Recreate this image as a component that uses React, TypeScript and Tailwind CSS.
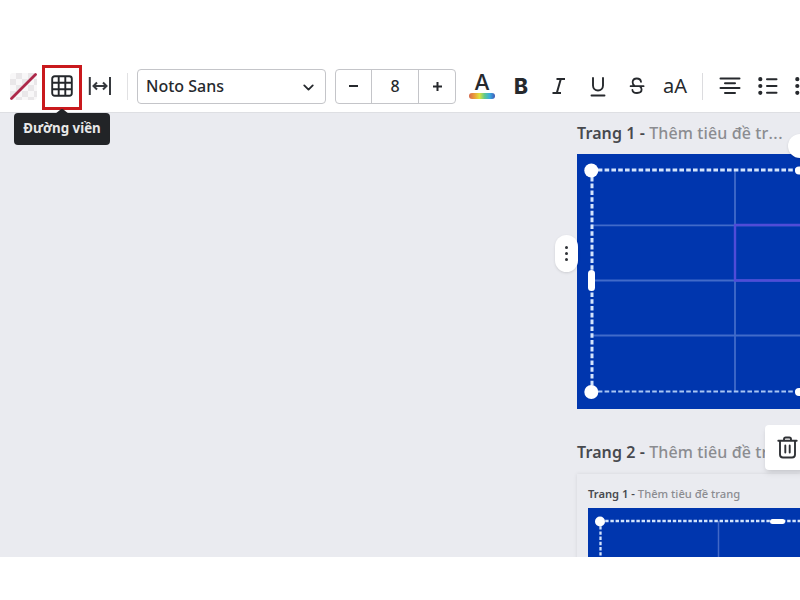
import { ReactNode } from "react"
import { ChevronDown } from "lucide-react"

function Toolbar() {
    return (
        <header className="mt-[60px] h-[52px] w-[840px] shrink-0 flex items-center bg-white text-[#26292d]">
            <svg className="ml-[10px] shrink-0" width="27" height="27" viewBox="0 0 27 27">
                <rect width="27" height="27" rx="3" fill="#f8f7f8" />
                <path d="M6 0h6v6H6zM18 0h6v6h-6zM0 6h6v6H0zM12 6h6v6h-6zM24 6h3v6h-3zM6 12h6v6H6zM18 12h6v6h-6zM0 18h6v6H0zM12 18h6v6h-6zM24 18h3v6h-3zM6 24h6v3H6zM18 24h6v3h-6z" fill="#e9e7e9" />
                <path d="M1.5 25.5L25.5 1.5" stroke="#ad2849" strokeWidth="2.8" strokeLinecap="round" />
            </svg>

            <div className="relative ml-[5px] w-10 h-[45px] mt-[2px] shrink-0 flex items-center justify-center border-[3px] border-[#c9191d]">
                <svg className="mb-[2px]" width="22" height="22" viewBox="0 0 22 22" fill="none" stroke="#24272b" strokeWidth="1.9">
                    <rect x="1.2" y="1.2" width="19.6" height="19.6" rx="2.5" />
                    <path d="M7.7 1v20M14.3 1v20M1 7.7h20M1 14.3h20" />
                </svg>
                <div className="absolute z-10 top-[45px] left-1/2 -translate-x-1/2 w-24 h-[32px] flex items-center justify-center rounded bg-[#222427] text-[#e8e8e8] text-[13.3px] font-bold whitespace-nowrap">
                    <svg className="absolute -top-[4px] left-[41px]" width="14" height="5" viewBox="0 0 14 5" fill="#222427">
                        <path d="M0 5L5 1Q7 -1 9 1L14 5z" />
                    </svg>
                    Đường viền
                </div>
            </div>

            <svg className="ml-[6px] shrink-0" width="24" height="22" viewBox="0 0 24 22" fill="none" stroke="#36393e" strokeWidth="2">
                <path d="M1.8 2v18M22 2v18M5.5 11h13M9 7.5L5.5 11L9 14.5M15 7.5L18.5 11L15 14.5" />
            </svg>
            <div className="ml-[15px] w-px h-[27px] bg-[#e1e1e3]" />

            <div className="ml-[9px] w-[189px] h-[35px] px-2 shrink-0 flex items-center justify-between border border-[#c4c5c9] rounded">
                <span className="text-base font-medium">Noto Sans</span>
                <ChevronDown className="mt-[2px]" size={17} strokeWidth={2.6} />
            </div>

            <div className="ml-[9px] w-[121px] h-[35px] shrink-0 flex border border-[#c4c5c9] rounded">
                <button className="w-[35px] flex items-center justify-center">
                    <svg width="9" height="10" stroke="currentColor" strokeWidth="2"><path d="M0 5h9" /></svg>
                </button>
                <div className="grow flex items-center justify-center border-x border-[#c4c5c9] text-base font-medium">8</div>
                <button className="w-9 flex items-center justify-center">
                    <svg width="9" height="9" stroke="currentColor" strokeWidth="2"><path d="M0 4.5h9M4.5 0v9" /></svg>
                </button>
            </div>

            <div className="ml-[13px] w-[26px] shrink-0 flex flex-col items-center">
                <span className="h-[19px] leading-[19px] text-[22px] font-medium font-['Inter',sans-serif]">A</span>
                <div className="mt-[1px] w-full h-[6px] rounded-full bg-[linear-gradient(90deg,#d5694c,#eb9b3a,#dfe13b,#5fc98d,#39aadf,#4157b5)]" />
            </div>
            <div className="ml-[17px] w-[18px] shrink-0 text-center text-[21px] leading-none font-extrabold font-['Inter',sans-serif]">B</div>
            <svg className="ml-[20px] shrink-0" width="18" height="18" viewBox="0 0 18 18" fill="none" stroke="currentColor" strokeWidth="2">
                <path d="M6.5 2H15M2.5 16H11M10.8 2L6.8 16" />
            </svg>
            <svg className="ml-[21px] mt-[2px] shrink-0" width="18" height="22" viewBox="0 0 18 22" fill="none" stroke="currentColor" strokeWidth="1.9">
                <path d="M4 2v7.5a5 5 0 0 0 10 0V2M2.5 19.5h13" strokeLinecap="round" />
            </svg>
            <svg className="ml-[22px] shrink-0" width="16" height="18" viewBox="0 0 16 18" fill="none" stroke="currentColor" strokeWidth="1.8">
                <path d="M12 4.8Q11.6 1.5 7.8 1.5T3.6 5Q3.6 7.6 5.5 8.8M1.6 9.2h13M10.8 9.2Q12.6 10.4 12.6 12.6Q12.6 16 8 16T3.4 12.8" strokeLinecap="round" />
            </svg>
            <div className="ml-[16px] w-[28px] shrink-0 text-center text-xl leading-none">aA</div>
            <div className="ml-[13px] w-px h-[27px] shrink-0 bg-[#dcdcdf]" />
            <svg className="ml-[16px] shrink-0" width="22" height="18" stroke="currentColor" strokeWidth="2" strokeLinecap="round">
                <path d="M1.5 1.5h19M6 6.3h10M1.5 11.1h19M6 16h10" />
            </svg>
            <BulletList className="ml-[17px] shrink-0" />
            <BulletList className="ml-[17px] shrink-0" />
        </header>
    )
}

function BulletList({ className }: { className: string }) {
    return (
        <svg className={className} width="20" height="18" fill="currentColor" stroke="currentColor" strokeLinecap="round">
            <path d="M2.3 2.2h.01M2.3 9h.01M2.3 15.8h.01" strokeWidth="4.2" />
            <path d="M9 2.2h9.5M9 9h9.5M9 15.8h9.5" strokeWidth="2" />
        </svg>
    )
}

function PageTitle({ name, className, children }: { name: string, className: string, children: ReactNode }) {
    return (
        <h2 className={`whitespace-nowrap font-medium text-[#8b8c90] ${className}`}>
            <span className="font-semibold text-[#47494e]">{name} - </span>
            {children}
        </h2>
    )
}

function SelectedTable() {
    return (
        <svg className="block" width="223" height="255" viewBox="0 0 223 255" fill="none">
            <rect width="223" height="255" fill="#0036ae" />
            <g stroke="#416bc9" strokeWidth="1.8">
                <path d="M14 71.3h209M14 126.5h209M14 181.5h209M158 16v222" />
            </g>
            <path d="M223 71H158v55.5h65" stroke="#504cd8" strokeWidth="2.4" />
            <g stroke="#d3e4fc" strokeDasharray="4.6 2.2">
                <path d="M14 16h209" strokeWidth="3" />
                <path d="M15 16v222" strokeWidth="3" />
                <path d="M14 237.5h209" strokeWidth="2.2" stroke="#a9c6f3" />
            </g>
            <g fill="#fff">
                <circle cx="14.3" cy="16.5" r="7" />
                <circle cx="14.3" cy="238" r="7" />
                <circle cx="222" cy="16.5" r="4" />
                <circle cx="222" cy="238" r="4" />
                <rect x="11" y="116" width="7" height="21" rx="3.5" />
            </g>
        </svg>
    )
}

function NestedTable() {
    return (
        <svg className="block" width="212" height="60" viewBox="0 0 212 60" fill="none">
            <rect width="212" height="60" fill="#0036ae" />
            <path d="M130.5 13v47" stroke="#4168c7" strokeWidth="1.5" />
            <path d="M12 13h200M12.5 13v47" stroke="#d3e4fc" strokeWidth="2.3" strokeDasharray="3.4 1.8" />
            <circle cx="12" cy="13.5" r="5" fill="#fff" />
            <rect x="182" y="11" width="15" height="5" rx="2.5" fill="#fff" />
        </svg>
    )
}

export default function App() {
    return (
        <div className="w-[800px] h-[600px] overflow-hidden flex flex-col bg-white font-['Noto_Sans','Open_Sans',sans-serif]">
            <Toolbar />
            <main className="h-[445px] shrink-0 overflow-hidden bg-[#eaebf0] border-t border-[#dedfe3] pl-[577px]">
                <PageTitle name="Trang 1" className="mt-[8px] h-[33px] leading-6 text-base tracking-[0.1px]">
                    Thêm tiêu đề tr<span className="tracking-[0.6px]">...</span>
                </PageTitle>
                <section className="relative">
                    <SelectedTable />
                    <div className="absolute -left-[22px] top-[81px] w-[23px] h-[37px] flex flex-col items-center justify-center gap-[3px] rounded-full bg-white shadow">
                        <i className="size-[3px] rounded-full bg-[#303236]" />
                        <i className="size-[3px] rounded-full bg-[#303236]" />
                        <i className="size-[3px] rounded-full bg-[#303236]" />
                    </div>
                    <div className="absolute left-[211px] -top-[20px] size-6 rounded-full bg-white shadow-sm" />
                </section>

                <div className="relative mt-[31px] h-[34px]">
                    <PageTitle name="Trang 2" className="leading-6 text-base tracking-[0.1px]">Thêm tiêu đề trang</PageTitle>
                    <div className="absolute left-[188px] -top-[15px] w-12 h-[45px] pl-[12px] flex items-center rounded bg-white shadow-md">
                        <svg width="21" height="23" viewBox="0 0 21 23" fill="none" stroke="#303236" strokeWidth="1.9" strokeLinecap="round">
                            <path d="M1.3 4.7h18.4M7 4.5V3.2Q7 1.5 8.7 1.5h3.6Q14 1.5 14 3.2v1.3M3 5v13.5Q3 21.5 6 21.5h9q3 0 3-3V5M8.3 9.5v7M12.7 9.5v7" />
                        </svg>
                    </div>
                </div>
                <section className="h-[90px] pl-[11px] pt-[12px] shadow-[0_0_4px_rgba(0,0,0,0.09)]">
                    <PageTitle name="Trang 1" className="h-[22px] leading-4 text-[11.2px]">Thêm tiêu đề trang</PageTitle>
                    <NestedTable />
                </section>
            </main>
        </div>
    )
}
